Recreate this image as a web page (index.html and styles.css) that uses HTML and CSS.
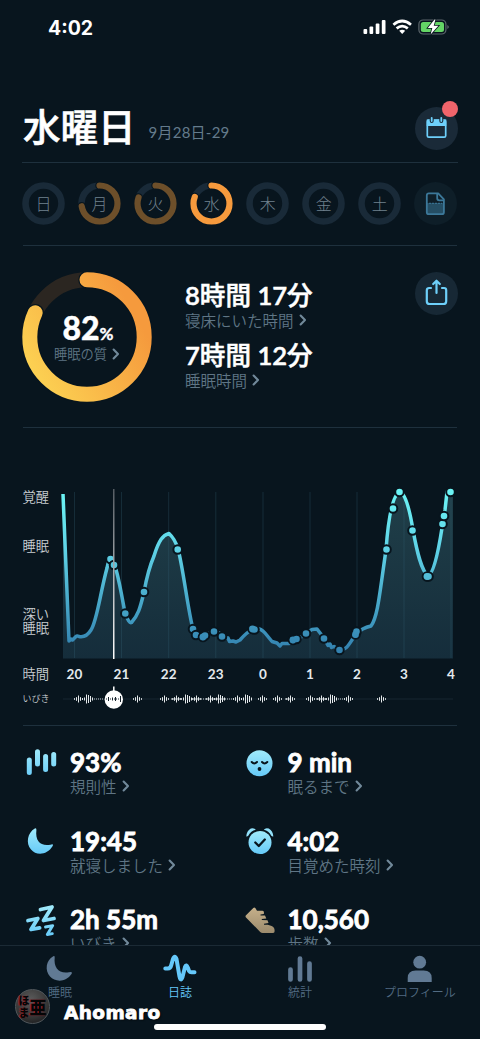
FILE: index.html
```html
<!DOCTYPE html>
<html lang="ja">
<head>
<meta charset="utf-8">
<title>水曜日</title>
<link rel="stylesheet" href="styles.css">
</head>
<body>
<svg class="defs" width="0" height="0" aria-hidden="true">
  <defs>
    <linearGradient id="ice" x1="0" y1="0" x2="0" y2="1"><stop offset="0" stop-color="#a0eafb"/><stop offset="1" stop-color="#66caf8"/></linearGradient>
    <linearGradient id="iceBox" gradientUnits="userSpaceOnUse" x1="0" y1="2" x2="0" y2="32"><stop offset="0" stop-color="#a0eafb"/><stop offset="1" stop-color="#66caf8"/></linearGradient>
    <linearGradient id="gold" x1="0" y1="0" x2="0" y2="1"><stop offset="0" stop-color="#c6b08a"/><stop offset="1" stop-color="#9c8b6d"/></linearGradient>
    <symbol id="chev" viewBox="0 0 8 12"><path d="M1.6 1.5 6 6 1.6 10.5" fill="none" stroke="#71899a" stroke-width="2.1" stroke-linecap="round" stroke-linejoin="round"/></symbol>
  </defs>
</svg>
<div class="app">
  <div class="content">
    <div class="status">
      <span class="clock">4:02</span>
      <svg class="status-icons" width="88" height="18" viewBox="362 18 88 18">
        <g fill="#fff"><rect x="363.5" y="29" width="3.7" height="5" rx="1"/><rect x="369.5" y="26.5" width="3.7" height="7.5" rx="1"/><rect x="375.700" y="23.500" width="3.700" height="10.500" rx="1"/><rect x="381.800" y="20" width="3.700" height="14" rx="1"/></g>
        <g fill="none" stroke="#fff" stroke-width="2.7"><path d="M393.400 24.700Q402.200 17.300 411 24.700"/><path d="M396.600 28.400Q402.200 23.700 407.800 28.400"/></g>
        <path d="M399.200 30.800Q402.200 28.600 405.200 30.800L402.200 34Z" fill="#fff"/>
        <rect x="418.900" y="20" width="27" height="14" rx="4.300" fill="none" stroke="#5c666c" stroke-width="1.200"/>
        <rect x="420.800" y="21.900" width="23.200" height="10.200" rx="2.500" fill="#64d566"/>
        <path d="M447.300 25v4q1.600-.8 1.600-2t-1.600-2Z" fill="#5c666c"/>
        <path d="M434.500 19.500 427.800 28h4.500l-1.700 6.500 7.800-8.800h-4.700l1.800-6.200Z" fill="#fff" stroke="#08151e" stroke-width="1.600" paint-order="stroke"/>
      </svg>
    </div>

    <header class="header">
      <h1>水曜日</h1><span class="date">9月28日-29</span>
      <div class="round-btn">
        <svg width="43" height="43" viewBox="0 0 43 43"><rect x="12.300" y="13.200" width="18.400" height="17" rx="1.500" fill="none" stroke="#6ed0fa" stroke-width="1.700"/><path d="M11.700 12.500h19.600V19H11.700Z" fill="#6ed0fa"/><path d="M16.700 9v5M26.300 9v5" stroke="#1a2a38" stroke-width="4" stroke-linecap="round"/><path d="M16.700 10.800v3.300M26.300 10.800v3.300" stroke="#6ed0fa" stroke-width="1.800" stroke-linecap="round"/></svg>
        <span class="badge"></span>
      </div>
    </header>

    <nav class="days">
      <div class="day"><svg viewBox="0 0 43 43"><circle class="track" cx="21.500" cy="21.500" r="18"/></svg><span>日</span></div>
      <div class="day"><svg viewBox="0 0 43 43"><circle class="track" cx="21.500" cy="21.500" r="18"/><circle class="halo" cx="21.500" cy="21.500" r="18" pathLength="100" stroke-dasharray="72.500 100"/><circle class="arc dim" cx="21.500" cy="21.500" r="18" pathLength="100" stroke-dasharray="72.500 100"/></svg><span>月</span></div>
      <div class="day"><svg viewBox="0 0 43 43"><circle class="track" cx="21.500" cy="21.500" r="18"/><circle class="halo" cx="21.500" cy="21.500" r="18" pathLength="100" stroke-dasharray="80.500 100"/><circle class="arc dim" cx="21.500" cy="21.500" r="18" pathLength="100" stroke-dasharray="80.500 100"/></svg><span>火</span></div>
      <div class="day"><svg viewBox="0 0 43 43"><circle class="track" cx="21.500" cy="21.500" r="18"/><circle class="halo" cx="21.500" cy="21.500" r="18" pathLength="100" stroke-dasharray="81 100"/><circle class="arc" cx="21.500" cy="21.500" r="18" pathLength="100" stroke-dasharray="81 100"/></svg><span>水</span></div>
      <div class="day"><svg viewBox="0 0 43 43"><circle class="track" cx="21.500" cy="21.500" r="18"/></svg><span>木</span></div>
      <div class="day"><svg viewBox="0 0 43 43"><circle class="track" cx="21.500" cy="21.500" r="18"/></svg><span>金</span></div>
      <div class="day"><svg viewBox="0 0 43 43"><circle class="track" cx="21.500" cy="21.500" r="18"/></svg><span>土</span></div>
      <div class="day note"><svg viewBox="0 0 43 43"><path d="M13 21h17v11H13Z" fill="#254e64"/><path d="M14.800 11.400h9.400l5.700 6v12.800a2 2 0 0 1-2 2H14.800a2 2 0 0 1-2-2V13.400a2 2 0 0 1 2-2Z" fill="none" stroke="#3c7899" stroke-width="1.800" stroke-linejoin="round"/><path d="M23.200 12v4.300q0 2 2 2h4.200" fill="none" stroke="#3c7899" stroke-width="1.800"/><path d="M15 21.300h13" stroke="#3c7899" stroke-dasharray="2 1"/></svg></div>
    </nav>

    <section class="summary">
      <div class="quality">
        <svg viewBox="0 0 130 130">
          <defs><linearGradient id="sun" gradientUnits="userSpaceOnUse" x1="26" y1="0" x2="90" y2="112"><stop offset="0" stop-color="#fdd654"/><stop offset="1" stop-color="#f59a3d"/></linearGradient></defs>
          <circle class="track" cx="65" cy="65" r="57.200"/>
          <circle class="halo" cx="65" cy="65" r="57.200" pathLength="100" stroke-dasharray="82 100"/>
          <circle class="arc" cx="65" cy="65" r="57.200" pathLength="100" stroke-dasharray="82 100"/>
        </svg>
        <div class="quality-text"><div class="pct">82<small>%</small></div><div class="label">睡眠の質<svg class="chev"><use href="#chev"/></svg></div></div>
      </div>
      <div class="times">
        <div><div class="value">8時間 17分</div><div class="label">寝床にいた時間<svg class="chev"><use href="#chev"/></svg></div></div>
        <div><div class="value">7時間 12分</div><div class="label">睡眠時間<svg class="chev"><use href="#chev"/></svg></div></div>
      </div>
      <div class="round-btn">
        <svg width="43" height="43" viewBox="0 0 43 43" fill="none" stroke="#6ed0fa" stroke-width="2.200" stroke-linecap="round" stroke-linejoin="round"><path d="M16 16h-2a2.200 2.200 0 0 0-2.200 2.200v11a2.800 2.800 0 0 0 2.800 2.800h13.800a2.800 2.800 0 0 0 2.800-2.800v-11A2.200 2.200 0 0 0 29 16h-2M21.500 21V9.200M18.200 12l3.300-3.300 3.300 3.300"/></svg>
      </div>
    </section>

    <section class="chart">
      <svg width="434" height="232" viewBox="23 481 434 232">
        <defs>
          <linearGradient id="line" gradientUnits="userSpaceOnUse" x1="0" y1="490" x2="0" y2="650"><stop offset="0" stop-color="#6cf5f5"/><stop offset=".35" stop-color="#60d5e8"/><stop offset="1" stop-color="#3382b0"/></linearGradient>
          <linearGradient id="area" gradientUnits="userSpaceOnUse" x1="0" y1="490" x2="0" y2="659"><stop offset="0" stop-color="#203f49"/><stop offset="1" stop-color="#152d3b"/></linearGradient>
          <linearGradient id="cursor" x1="0" y1="0" x2="0" y2="1"><stop offset="0" stop-color="#555c63"/><stop offset="1" stop-color="#fff"/></linearGradient>
          <g id="small-wave"><path d="M-4-.8v1.600M-2-1.800v3.600M0-3.500v7M2-1.800v3.600M4-.8v1.600"/></g>
          <g id="big-wave"><path d="M-6-.8v1.600M-4-1.500v3M-2-4.500v9M0-4v8M2-3v6M4-1.500v3"/></g>
          <path id="wave" d="M63 494L69 641 71 639 72.500 640 76 636.500Q77 635.500 79 636.500Q86 638 91 630C97 621 100 594 107 568Q109 558 111 559C116 561 121 592 125 613Q129 624 131.500 622.500C138 615 140 609 144 592Q148 570 154 556C159 540 163 535 169 533.500Q175 539 178 549C183 567 188 611 193 629Q196 636 201 637C209 637 209 630 214 631.500Q220 632 223 637L228 638 229.500 641.500 233 641 236 642 240 640Q247 632 253 629Q260 627 265 633L272 641.500 277 643 280 646 282 643.500 289 643.500 294 640 300 638 306 633 312 629.500 317 629 324 638 328 645.500 330 644 331.500 647.500 334 646.500 339 650C347 651 350 642 356 634Q362 628 371 626C378 617 380 590 386 550Q390 495 400 492Q407 494 413 530C417 552 421 570 428 576Q435 573 442 528L445 510 447 492 450 491"/>
        </defs>
        <path d="M63 494L69 641 71 639 72.500 640 76 636.500Q77 635.500 79 636.500Q86 638 91 630C97 621 100 594 107 568Q109 558 111 559C116 561 121 592 125 613Q129 624 131.500 622.500C138 615 140 609 144 592Q148 570 154 556C159 540 163 535 169 533.500Q175 539 178 549C183 567 188 611 193 629Q196 636 201 637C209 637 209 630 214 631.500Q220 632 223 637L228 638 229.500 641.500 233 641 236 642 240 640Q247 632 253 629Q260 627 265 633L272 641.500 277 643 280 646 282 643.500 289 643.500 294 640 300 638 306 633 312 629.500 317 629 324 638 328 645.500 330 644 331.500 647.500 334 646.500 339 650C347 651 350 642 356 634Q362 628 371 626C378 617 380 590 386 550Q390 495 400 492Q407 494 413 530C417 552 421 570 428 576Q435 573 442 528L445 510 447 492 453 492V658.500H63Z" fill="url(#area)"/>
        <path d="M74.500 492V658M121.500 492V658M168.700 492V658M215.800 492V658M263 492V658M310 492V658M357 492V658M404 492V658M451 492V658" stroke="#356577" stroke-opacity=".3"/>
        <use href="#wave" fill="none" stroke="url(#line)" stroke-width="3.500" stroke-linejoin="round"/>
        <g class="dots">
          <circle cx="110.500" cy="559" r="4.300"/><circle cx="114" cy="565" r="4.300"/><circle cx="125.300" cy="613.500" r="4.300"/><circle cx="144" cy="592" r="4.300"/><circle cx="177.700" cy="549.500" r="4.300"/><circle cx="193" cy="629" r="4.300"/><circle cx="196" cy="635" r="4.300"/><circle cx="203" cy="637" r="4.300"/><circle cx="205" cy="635.500" r="4.300"/><circle cx="214" cy="631.500" r="4.300"/><circle cx="222" cy="636.500" r="4.300"/><circle cx="252.500" cy="629" r="4.300"/><circle cx="254.500" cy="629.500" r="4.300"/><circle cx="293" cy="640" r="4.300"/><circle cx="296.500" cy="639" r="4.300"/><circle cx="306" cy="633.500" r="4.300"/><circle cx="324" cy="638.500" r="4.300"/><circle cx="339.500" cy="650" r="4.300"/><circle cx="355.500" cy="634.500" r="4.300"/><circle cx="356.500" cy="631.500" r="4.300"/><circle cx="386.500" cy="549.500" r="4.300"/><circle cx="393" cy="508.500" r="4.300"/><circle cx="399.500" cy="492" r="4.300"/><circle cx="412.500" cy="530.500" r="4.300"/><circle cx="427" cy="576.500" r="4.300"/><circle cx="428.500" cy="576.500" r="4.300"/><circle cx="442.500" cy="524" r="4.300"/><circle cx="444" cy="516" r="4.300"/><circle cx="450.500" cy="492" r="4.300"/>
        </g>
        <g fill="url(#line)">
          <circle cx="203" cy="637" r="3.400"/><circle cx="252.500" cy="629" r="3.400"/><circle cx="293" cy="640" r="3.400"/><circle cx="355.500" cy="634.500" r="3.400"/><circle cx="427" cy="576.500" r="3.400"/>
        </g>
        <rect x="113" y="489" width="1.500" height="170" fill="url(#cursor)"/>
        <g class="ylabels"><text x="22.500" y="501.500">覚醒</text><text x="22.500" y="551">睡眠</text><text x="22.500" y="619">深い</text><text x="22.500" y="633">睡眠</text><text x="22.500" y="679">時間</text><text class="tiny" x="22.500" y="702">いびき</text></g>
        <g class="hours"><text x="74.500" y="679">20</text><text x="121.500" y="679">21</text><text x="168.700" y="679">22</text><text x="215.800" y="679">23</text><text x="263" y="679">0</text><text x="310" y="679">1</text><text x="357" y="679">2</text><text x="404" y="679">3</text><text x="451" y="679">4</text></g>
        <path d="M63 699H453" stroke="#172630"/>
        <path d="M94 699h10M171 699h10M193 699h60M285 699h5M316 699h38" stroke="#c6cdd1" stroke-width="1.200" stroke-dasharray="1 1"/>
        <g stroke="#e6eaec" stroke-width="1">
          <use href="#small-wave" x="78.500" y="699"/><use href="#big-wave" x="88.500" y="699"/><use href="#small-wave" x="137.500" y="699"/><use href="#small-wave" x="164.500" y="699"/><use href="#small-wave" x="176.500" y="699"/><use href="#big-wave" x="187.500" y="699"/><use href="#small-wave" x="196.500" y="699"/><use href="#small-wave" x="210.500" y="699"/><use href="#big-wave" x="220.500" y="699"/><use href="#small-wave" x="237.500" y="699"/><use href="#big-wave" x="247.500" y="699"/><use href="#small-wave" x="262.500" y="699"/><use href="#small-wave" x="277.500" y="699"/><use href="#small-wave" x="290.500" y="699"/><use href="#small-wave" x="310.500" y="699"/><use href="#small-wave" x="321.500" y="699"/><use href="#big-wave" x="332.500" y="699"/><use href="#small-wave" x="348.500" y="699"/><use href="#small-wave" x="381.500" y="699"/>
        </g>
        <circle cx="113.800" cy="699.500" r="9.200" fill="#fff"/><path d="M113.800 686.500v5" stroke="#fff" stroke-width="1.500"/>
        <path d="M106 699h16" stroke="#697279" stroke-width="1.400" stroke-dasharray="1 1"/><path d="M108.500 697v4M112.500 697.500v3M115.500 697v4M120.500 696v6" stroke="#17232c" stroke-width="1"/>
      </svg>
    </section>

    <section class="stats">
      <div class="stat"><svg class="icon" viewBox="0 0 38 36"><path d="M6.300 13v12.500M14.500 4.800V17M22.600 9.500v13M30.700 7.500v9.500" stroke="url(#iceBox)" stroke-width="5" stroke-linecap="round"/></svg><div><div class="value">93%</div><div class="label">規則性<svg class="chev"><use href="#chev"/></svg></div></div></div>
      <div class="stat"><svg class="icon" viewBox="0 0 38 36"><circle cx="18.500" cy="16.300" r="13" fill="url(#ice)"/><path d="M10.700 15q2.500 2.800 5.300 0M21 15q2.500 2.800 5.300 0" fill="none" stroke="#08151e" stroke-width="2" stroke-linecap="round"/><circle cx="18.500" cy="22" r="1.900" fill="#08151e"/></svg><div><div class="value">9 min</div><div class="label">眠るまで<svg class="chev"><use href="#chev"/></svg></div></div></div>
      <div class="stat"><svg class="icon" viewBox="0 0 38 36"><path d="M11.800 3.500Q13.500 2.500 13.400 5C12 16.500 18 21.500 27.500 19.700Q31 18.600 29.700 21C24 30.500 13 30.700 8 24.500C2.500 18.500 4.500 7.500 11.800 3.500Z" fill="url(#ice)"/></svg><div><div class="value">19:45</div><div class="label">就寝しました<svg class="chev"><use href="#chev"/></svg></div></div></div>
      <div class="stat"><svg class="icon" viewBox="0 0 38 36"><circle cx="19" cy="17.500" r="11.500" fill="url(#ice)"/><path d="M5.300 11.500q.2-5.500 4.500-8 3.500-1 5 1.300-5 1.200-7.500 6-1 1-2 .7ZM32.300 11.500q-.2-5.500-4.500-8-3.500-1-5 1.300 5 1.200 7.500 6 1 1 2 .7Z" fill="#92e1fa"/><path d="m14.300 17.500 3.500 3.500 6-6.500" fill="none" stroke="#08151e" stroke-width="2.300" stroke-linecap="round" stroke-linejoin="round"/></svg><div><div class="value">4:02</div><div class="label">目覚めた時刻<svg class="chev"><use href="#chev"/></svg></div></div></div>
      <div class="stat"><svg class="icon" viewBox="0 0 38 36"><g fill="none" stroke="url(#iceBox)" stroke-width="3.800" stroke-linecap="round" stroke-linejoin="round"><path d="M17.500 5.500 29 3 20.500 16.500 31 14.500M5 16.500l9.800-2L8 25.500l8.600-1.700"/><path d="m22.500 23 7.200-1.400-5.400 9 5-1" stroke-width="2.900"/></g></svg><div><div class="value">2h 55m</div><div class="label">いびき<svg class="chev"><use href="#chev"/></svg></div></div></div>
      <div class="stat"><svg class="icon" viewBox="0 0 38 36"><path d="M5 11.300 12.300 4Q13.300 3 14.300 4L16 6.800h5.500q1.500 0 1.500 2l-.2 1.300-3.300.3v1l4.500.2 1.300 3-4.500.5v1l5.700.2 1 2.700-4.500.7v1h3.800l3.800 1.300q3.200 1 3 5.300 0 1.600-1.500 1.600H21.700q-1.500 0-2.500-1L5 13.500q-1-1 0-2.200Z" fill="url(#gold)"/></svg><div><div class="value">10,560</div><div class="label">歩数<svg class="chev"><use href="#chev"/></svg></div></div></div>
    </section>
  </div>

  <nav class="tabs">
    <div class="tab"><svg viewBox="0 0 40 30"><path d="M13.300 2.300Q14.800 1.600 14.700 3.500C13.500 14 19 20 29 18.300Q33 17.200 31.500 20C26 28.500 15 28.300 10 22.500C4.500 16.500 6 6 13.300 2.300Z" fill="#617a94"/></svg><span>睡眠</span></div>
    <div class="tab active"><svg viewBox="0 0 40 30"><path d="M5.300 14.500h2.500Q10.500 14.500 11.300 11L13 5Q14.800 .5 16.500 5L19.500 22.500Q20.700 28 22.500 23L25 13Q26.200 9.500 28 14L29 17Q29.800 18.300 31.500 18.300h3" fill="none" stroke="#65c8fa" stroke-width="4" stroke-linecap="round"/></svg><span>日誌</span></div>
    <div class="tab"><svg viewBox="0 0 40 30"><path d="M10.500 15.500v10M20 4.500v21M29.500 9.500v16" stroke="#617a94" stroke-width="4.700" stroke-linecap="round"/></svg><span>統計</span></div>
    <div class="tab"><svg viewBox="0 0 40 30"><circle cx="19.700" cy="8.200" r="6.400" fill="#617a94"/><path d="M7.700 28v-4q0-7.500 8-7.500h8q8 0 8 7.500v4Z" fill="#617a94"/></svg><span>プロフィール</span></div>
  </nav>
  <div class="home-bar"></div>
  <div class="watermark">
    <div class="seal"><span class="seal-kana">ほ<br>ま</span><span>亜</span></div>
    <span class="name">Ahomaro</span>
  </div>
</div>
</body>
</html>
```
FILE: styles.css
```css
* { box-sizing: border-box; }
body { margin: 0; background: #08151e; color: #fff; font-family: Lato, "Noto Sans CJK JP", sans-serif; }
.defs { position: absolute; }
.app { position: relative; width: 480px; height: 1039px; overflow: hidden; display: flex; flex-direction: column; background: #08151e; }
.content { height: 945px; overflow: hidden; padding: 0 23px; flex: none; }

.status { height: 98px; display: flex; justify-content: space-between; align-items: flex-start; padding: 18px 7px 0 25px; }
.clock { font: 700 19.500px/20px Inter, sans-serif; }

.header { height: 63.500px; display: flex; align-items: flex-start; }
h1 { margin: 0; font-size: 37.500px; line-height: 54px; font-weight: 500; font-family: "Noto Sans CJK JP", sans-serif; -webkit-text-stroke: .6px #fff; }
.date { margin: 22px 0 0 13px; font-size: 15px; line-height: 24px; color: #647b8c; letter-spacing: .25px; }
.round-btn { position: relative; width: 43px; height: 43px; border-radius: 50%; background: #172835; margin-left: auto; margin-right: -.5px; flex: none; }
.header .round-btn { margin-top: 8.500px; background: #1a2a38; }
.badge { position: absolute; right: 0; top: -6px; width: 16px; height: 16px; border-radius: 50%; background: #f0646b; }

.days { height: 83px; border-top: 1px solid #1e303d; padding-top: 19.500px; margin: 0 -.5px 0 -1px; display: flex; justify-content: space-between; }
.day { width: 43px; height: 43px; display: grid; place-items: center; color: #71818e; font: 300 16px/20px "Noto Sans CJK JP", sans-serif; }
.day > * { grid-area: 1 / 1; }
.day span { margin-top: -2px; }
.day svg { width: 43px; height: 43px; }
.day .track { fill: none; stroke: #192a38; stroke-width: 6.600; }
.day .arc, .day .halo { fill: none; stroke: #f69a3d; stroke-width: 6.200; stroke-linecap: round; transform: rotate(-90deg); transform-origin: center; }
.day .halo { stroke: #08151e; stroke-width: 8.500; }
.day .dim { stroke: #6d4f2a; }
.note { border-radius: 50%; background: #0e1e28; }

.summary { height: 182px; border-top: 1px solid #1e303d; display: flex; align-items: flex-start; padding-top: 26px; }
.quality { width: 130px; height: 130px; display: grid; place-items: center; margin-left: -1px; flex: none; }
.quality > * { grid-area: 1 / 1; }
.quality circle { fill: none; stroke-linecap: round; transform: rotate(-90deg); transform-origin: center; }
.quality .track { stroke: #2b2621; stroke-width: 15; }
.quality .halo { stroke: #08151e; stroke-width: 17.500; }
.quality .arc { stroke: url(#sun); stroke-width: 15; }
.quality-text { text-align: center; display: grid; justify-items: center; }
.pct { font-size: 32px; line-height: 31px; font-weight: 900; -webkit-text-stroke: .4px #fff; padding-left: 2px; }
.pct small { font-size: 17px; font-weight: 700; }
.quality .label { font-size: 13.300px; line-height: 15px; margin-top: -3px; }
.label { color: #5f7585; font-weight: 350; font-size: 15.500px; line-height: 22px; font-family: "Noto Sans CJK JP", sans-serif; white-space: nowrap; display: flex; align-items: center; }
.chev { width: 8px; height: 12px; margin-left: 5px; flex: none; }
.times { margin-left: 33px; padding-top: 9px; display: grid; row-gap: 10px; }
.value { font-size: 26px; line-height: 28px; font-weight: 700; white-space: nowrap; -webkit-text-stroke: .8px #fff; stroke-linejoin: round; }
.times .value { font: 500 25.600px/28px Lato, "Noto Sans CJK JP", sans-serif; font-weight: 600; font-family: Lato, "Noto Sans CJK JP Medium", "Noto Sans CJK JP", sans-serif; -webkit-text-stroke: .5px #fff; }
.times .label { height: 22px; }

.chart { height: 298px; border-top: 1px solid #1e303d; padding-top: 53px; }
.chart svg { display: block; overflow: visible; }
.dots { fill: url(#line); stroke: #08151e; stroke-width: 2; }
.ylabels { fill: #c9ced2; font: 350 13.300px "Noto Sans CJK JP", sans-serif; }
.ylabels .tiny { font-size: 9px; }
.hours { fill: #e4e9ed; font: 700 13.500px Lato, sans-serif; text-anchor: middle; letter-spacing: .2px; }

.stats { border-top: 1px solid #1e303d; padding-top: 22.500px; display: grid; grid-template-columns: 217.500px 217.500px; grid-auto-rows: 78.500px; }
.stat { display: flex; align-items: flex-start; gap: 9px; }
.stat .label { margin-top: -1px; }
.icon { width: 38px; height: 36px; flex: none; margin-top: -1.500px; }

.tabs { height: 94px; border-top: 1px solid #1b2a35; background: #08151e; display: grid; grid-template-columns: repeat(4, 120px); padding-top: 8px; }
.tab { display: flex; flex-direction: column; align-items: center; color: #526b82; font: 350 12px/16px "Noto Sans CJK JP", sans-serif; }
.tab svg { width: 40px; height: 30px; }
.active { color: #65c8fa; }
.home-bar { position: absolute; left: 154px; top: 1024px; width: 172px; height: 6px; border-radius: 3px; background: #fff; }
.watermark { position: absolute; left: 15px; top: 988px; height: 36px; display: flex; align-items: center; }
.seal { width: 35px; height: 35px; border-radius: 50%; background: radial-gradient(circle at 45% 30%, #5b5b5b, #343434 60%, #101214); border: 1px solid #51575b; display: flex; align-items: center; justify-content: center; color: #050505; font: 900 17px/17px "Noto Sans CJK JP", sans-serif; text-shadow: -1px 0 1px #a41f2c; }
.seal-kana { font-size: 11px; line-height: 12px; }
.name { margin: 14px 0 0 14px; font: 700 18.500px/24px "DejaVu Sans", sans-serif; -webkit-text-stroke: .8px #fff; letter-spacing: .4px; text-shadow: 1px 1px 2px #000; }
```
